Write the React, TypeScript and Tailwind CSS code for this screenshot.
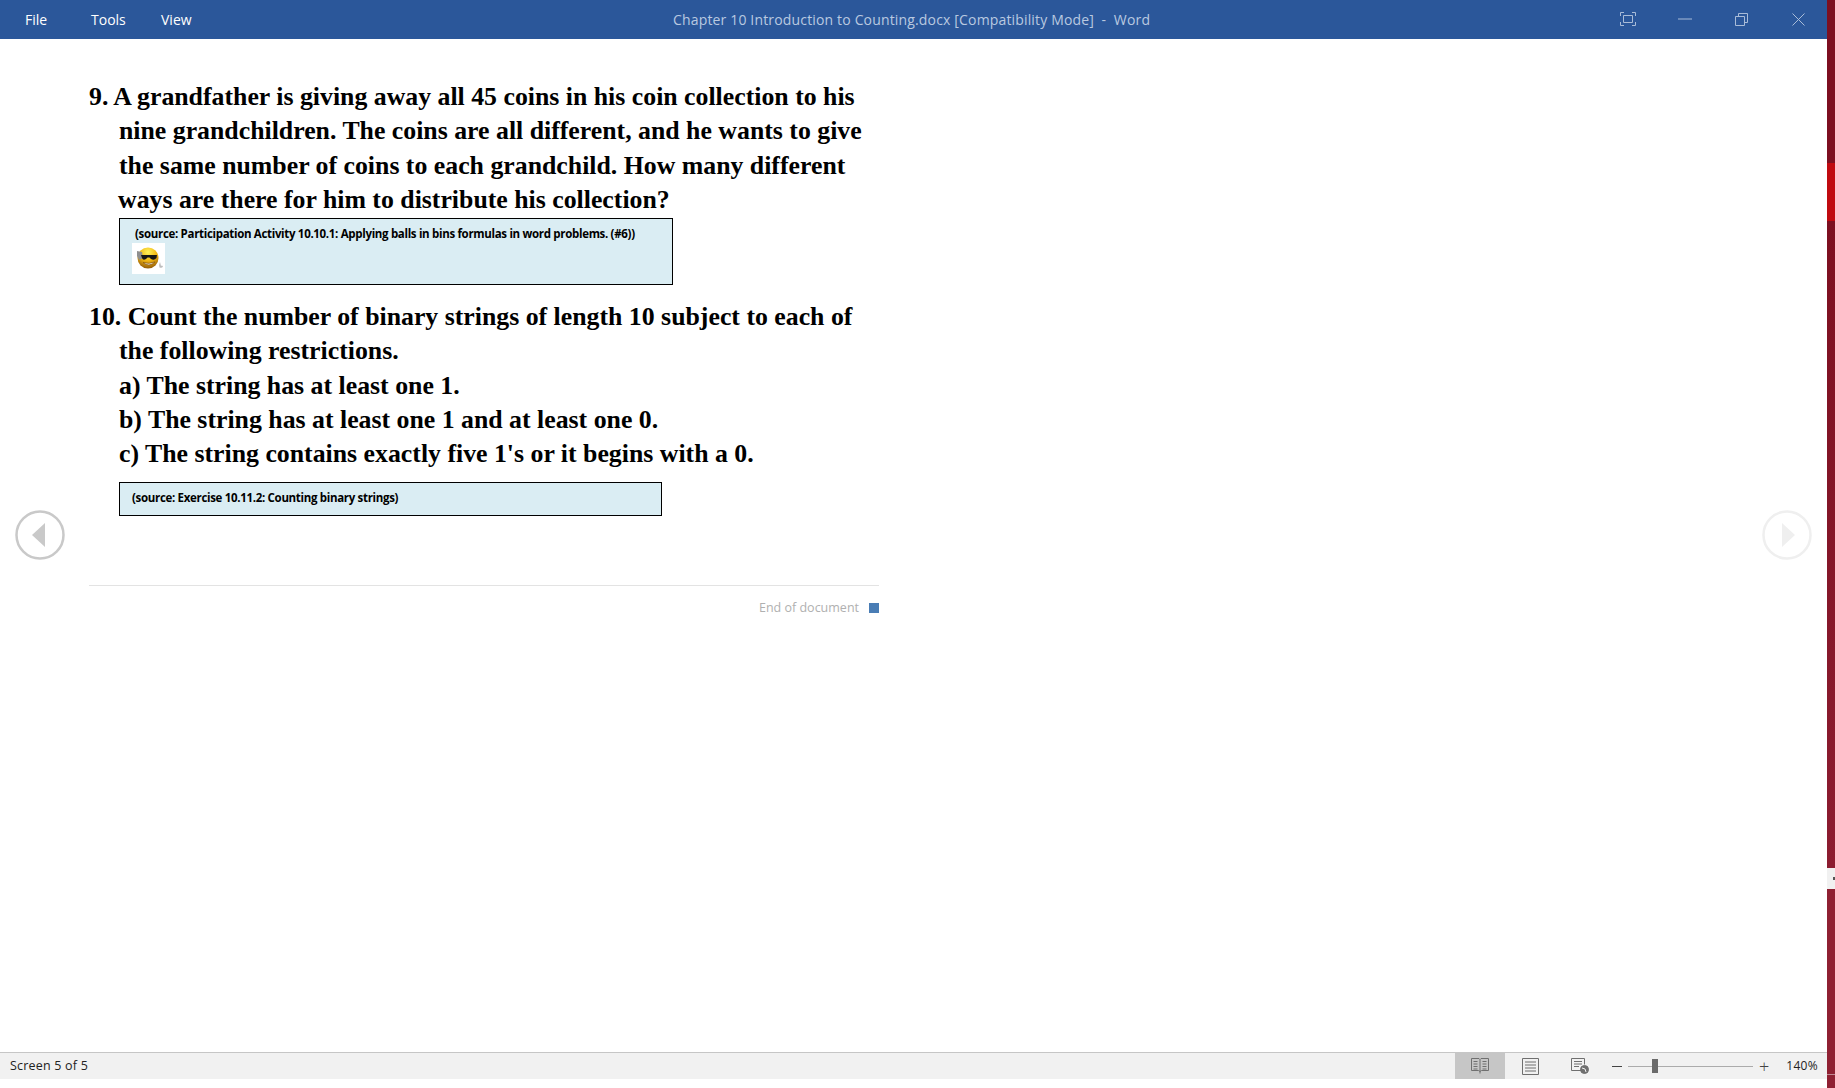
const lineClass = "h-[34.3px] leading-[34.3px] whitespace-nowrap";

function Smiley() {
  return (
    <svg width="33" height="31" viewBox="0 0 33 31" className="block">
      <defs>
        <radialGradient id="face" cx="50%" cy="22%" r="75%">
          <stop offset="0%" stopColor="#fff25a" />
          <stop offset="55%" stopColor="#f0b612" />
          <stop offset="100%" stopColor="#9a6208" />
        </radialGradient>
      </defs>
      <rect width="33" height="31" fill="#fff" />
      <circle cx="16" cy="15" r="10.500" fill="url(#face)" />
      <path d="M5 8 L10 9 L11 15 L7 17 L5 13 Z" fill="#8f8f8f" />
      <path d="M9 12 H25 L24.500 15 Q22 18 19 16 L17.500 14.500 H15.500 L14 16 Q11 18 10 15 Z" fill="#161616" />
      <path d="M11 19.500 Q17 24.500 23 19 Q17 21.500 11 19.500 Z" fill="#fff" stroke="#7a4a08" strokeWidth="0.6" />
      <path d="M28 19 q-1.500 3 -.5 5.500 q2.500 1 3.500 -1 q-1 -1.500 -2 -.5 z" fill="#bdbdbd" />
    </svg>
  );
}

function Book() {
  return (
    <svg width="18" height="16" viewBox="0 0 18 16" fill="none" stroke="#6f6f6f" strokeWidth="1">
      <path d="M.5.5h7.5l1 1 1-1h7.500v12h-7l-1.500 1-1.500-1h-7z" />
      <path d="M9 1.500v14M2.500 3.500h4M2.500 6h4M2.500 8.500h4M2.500 11h4M11.500 3.500h4M11.500 6h4M11.500 8.500h4M11.500 11h4" />
    </svg>
  );
}

function PrintLayout() {
  return (
    <svg width="17" height="17" viewBox="0 0 17 17" fill="none" stroke="#6f6f6f" strokeWidth="1">
      <path d="M.5.5h16v16H.5zM3 4h11M3 7h11M3 10h11M3 13h11" />
    </svg>
  );
}

function WebLayout() {
  return (
    <svg width="18" height="16" viewBox="0 0 18 16" fill="none" stroke="#6f6f6f" strokeWidth="1">
      <path d="M10 12.500H.5V.5h13v6M3 3.500h8M3 6h8M3 8.500h5" />
      <circle cx="13.500" cy="11.500" r="4" fill="#6f6f6f" />
      <path d="M11 10l3 1 1 3" stroke="#f1f1f1" />
    </svg>
  );
}

function NavCircle({ dir, tone }: { dir: "left" | "right"; tone: string }) {
  return (
    <svg width="50" height="50" viewBox="0 0 50 50" fill="none">
      <circle cx="25" cy="25" r="23.500" stroke={tone} strokeWidth="2.500" />
      {dir === "left" ? (
        <path d="M17 25 L30 13 V37 Z" fill={tone} />
      ) : (
        <path d="M33 25 L20 13 V37 Z" fill={tone} />
      )}
    </svg>
  );
}

export default function App() {
  return (
    <div className="flex h-[1088px] w-[1835px] overflow-hidden bg-white font-['Open_Sans',sans-serif]">
      <div className="flex min-w-0 flex-1 flex-col">
        {/* Title bar */}
        <header className="flex h-[39px] shrink-0 items-center bg-[#2b579a] pb-[1px] text-[14px] text-white">
          <span className="ml-[25px] w-[66px]">File</span>
          <span className="w-[70px]">Tools</span>
          <span className="w-[60px]">View</span>
          <span className="ml-[452px] w-[600px] whitespace-nowrap text-[14px] tracking-[0.16px] text-[#b9c9e0]">
            Chapter 10 Introduction to Counting.docx [Compatibility Mode]&nbsp; -&nbsp; Word
          </span>
          <div className="ml-auto flex items-center text-[#a9bcd8]">
            <span className="flex w-[57px] justify-center">
              <svg width="16" height="14" viewBox="0 0 16 14" fill="none" stroke="currentColor">
                <path d="M.5 4V.5H4M12 .5h3.500V4M15.500 10v3.500H12M4 13.500H.5V10M3.500 3.500h9v7h-9z" />
              </svg>
            </span>
            <span className="flex w-[57px] justify-center">
              <svg width="14" height="2" viewBox="0 0 14 2" stroke="currentColor"><path d="M0 1h14" /></svg>
            </span>
            <span className="flex w-[57px] justify-center">
              <svg width="13" height="13" viewBox="0 0 13 13" fill="none" stroke="currentColor">
                <path d="M.5 3.500h9v9h-9zM3.500 3.500v-3h9v9h-3" />
              </svg>
            </span>
            <span className="flex w-[57px] justify-center">
              <svg width="13" height="13" viewBox="0 0 13 13" stroke="currentColor"><path d="M.5.500l12 12M12.500.500l-12 12" /></svg>
            </span>
          </div>
        </header>

        {/* Reading area */}
        <main className="flex min-h-0 flex-1 items-start">
          <div className="mt-[471px] ml-[15px] w-[50px] shrink-0">
            <NavCircle dir="left" tone="#c9c9c9" />
          </div>
          <div className="mt-[41px] ml-[24px] w-[790px] shrink-0 font-['Liberation_Serif',serif] text-[25.800px] font-bold text-black">
            <div className={lineClass}>9. A grandfather is giving away all 45 coins in his coin collection to his</div>
            <div className={`${lineClass} pl-[30px]`}>nine grandchildren. The coins are all different, and he wants to give</div>
            <div className={`${lineClass} pl-[30px]`}>the same number of coins to each grandchild. How many different</div>
            <div className={`${lineClass} pl-[29px]`}>ways are there for him to distribute his collection?</div>

            <div className="mt-[1px] ml-[30px] h-[67px] w-[554px] border border-black bg-[#daedf3] pt-[7px] pl-[12px] font-['Open_Sans',sans-serif] text-[11.500px] font-bold tracking-[-0.32px]">
              <div className="h-[16px] leading-[16px] whitespace-nowrap pl-[3px]">
                (source: Participation Activity 10.10.1: Applying balls in bins formulas in word problems. (#6))
              </div>
              <div className="mt-[1px]"><Smiley /></div>
            </div>

            <div className={`${lineClass} mt-[15px]`}>10. Count the number of binary strings of length 10 subject to each of</div>
            <div className={`${lineClass} pl-[30px]`}>the following restrictions.</div>
            <div className={`${lineClass} pl-[30px]`}>a) The string has at least one 1.</div>
            <div className={`${lineClass} pl-[30px]`}>b) The string has at least one 1 and at least one 0.</div>
            <div className={`${lineClass} pl-[30px]`}>c) The string contains exactly five 1's or it begins with a 0.</div>

            <div className="mt-[10px] ml-[30px] flex h-[34px] w-[543px] items-center border border-black bg-[#daedf3] pb-[2px] pl-[12px] font-['Open_Sans',sans-serif] text-[11.500px] font-bold tracking-[-0.32px]">
              (source: Exercise 10.11.2: Counting binary strings)
            </div>

            <div className="mt-[69px] h-[1px] bg-[#e3e3e3]" />
            <div className="mt-[13px] flex items-center justify-end font-['Open_Sans',sans-serif] text-[12.500px] font-normal text-[#b0b0b0]">
              <span>End of document</span>
              <span className="ml-[10px] h-[10px] w-[10px] bg-[#4a7db5]" />
            </div>
          </div>
          <div className="mt-[471px] ml-[883px] w-[50px] shrink-0">
            <NavCircle dir="right" tone="#efefef" />
          </div>
        </main>

        {/* Status bar */}
        <footer className="flex h-[27px] shrink-0 items-center border-t border-[#c6c6c6] bg-[#f1f1f1] text-[12.500px] text-[#222]">
          <span className="ml-[10px] tracking-[0.2px]">Screen 5 of 5</span>
          <div className="ml-auto flex h-full items-center">
            <span className="flex h-full w-[50px] items-center justify-center bg-[#c6c6c6]"><Book /></span>
            <span className="flex h-full w-[50px] items-center justify-center"><PrintLayout /></span>
            <span className="flex h-full w-[50px] items-center justify-center"><WebLayout /></span>
            <span className="ml-[7px] h-[1px] w-[10px] bg-[#444]" />
            <div className="relative ml-[6px] h-[1px] w-[125px] bg-[#ababab]">
              <span className="absolute top-[-7px] left-[24px] h-[14px] w-[6px] bg-[#6a6a6a]" />
            </div>
            <span className="ml-[6px] text-[18px] leading-none font-light text-[#444]">+</span>
            <span className="mr-[9px] ml-[17px] text-[12px] tracking-[0.3px]">140%</span>
          </div>
        </footer>
        <div className="h-[9px] shrink-0 bg-white" />
      </div>

      {/* Window behind, on the right edge */}
      <aside className="flex w-[8px] shrink-0 flex-col bg-[#8f2032]">
        <div className="h-[163px] bg-[#7d0f20]" />
        <div className="h-[58px] bg-[#c00a10]" />
        <div className="h-[647px] bg-linear-to-b from-[#7d0f20] to-[#8c1c30]" />
        <div className="flex h-[21px] items-center justify-end bg-[#f1f1f1]">
          <span className="h-[3px] w-[2px] bg-[#555]" />
        </div>
        <div className="h-[185px] bg-[#8f2032]" />
        <div className="h-[1px] bg-[#c08a94]" />
      </aside>
    </div>
  );
}
